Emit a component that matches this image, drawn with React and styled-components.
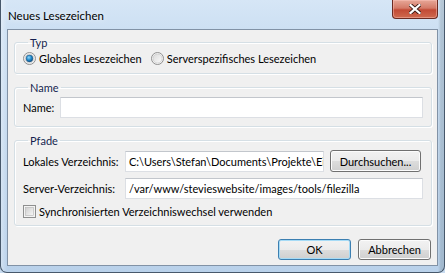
import React, { useState } from 'react';
import styled, { createGlobalStyle } from 'styled-components';

const GlobalStyle = createGlobalStyle`
  html, body {
    margin: 0;
    padding: 0;
    width: 445px;
    height: 273px;
    overflow: hidden;
    background: #c8dbef;
  }
  * { box-sizing: border-box; }
`;

const Frame = styled.div`
  width: 445px;
  height: 273px;
  display: flex;
  flex-direction: column;
  padding: 0 6px 6px 6px;
  border: 1px solid #47586b;
  border-top: none;
  border-radius: 0 0 7px 7px;
  background:
    linear-gradient(90deg, rgba(255,255,255,0.35) 0, rgba(255,255,255,0) 6px, rgba(255,255,255,0) 437px, rgba(90,110,120,0.25) 440px),
    linear-gradient(180deg, #d6e6f6 0, #cde0f3 28px, #b9d1ea 100%);
  font-family: Lato, "Open Sans", sans-serif;
  font-size: 11px;
  color: #000;
  white-space: nowrap;
`;

const TitleBar = styled.div`
  height: 29px;
  display: flex;
  justify-content: space-between;
  align-items: flex-start;
`;

const Title = styled.div`
  margin: 8px 0 0 1px;
  line-height: 16px;
  font-size: 11.5px;
  color: #000;
  text-shadow: 0 0 6px rgba(255, 255, 255, 0.9);
`;

const CloseButton = styled.div`
  width: 46px;
  height: 19px;
  display: flex;
  align-items: center;
  justify-content: center;
  border: 1px solid #6b2b22;
  border-top: none;
  border-radius: 0 0 4px 4px;
  background: linear-gradient(180deg, #e7a898 0, #d47a68 45%, #c24a35 55%, #cf6a4f 100%);
  box-shadow: inset 0 0 0 1px rgba(255, 200, 190, 0.45);
`;

const Client = styled.div`
  flex: 1;
  display: flex;
  flex-direction: column;
  border: 1px solid #8192a6;
  background: #f0f0f0;
  padding: 5px 5px 5px 6px;
`;

const Group = styled.fieldset`
  margin: ${({ $first }) => ($first ? '0' : '6px')} 0 0 0;
  padding: 0 8px ${({ $bottom }) => $bottom}px 8px;
  border: 1px solid #d5dfe5;
  border-radius: 3px;
  box-shadow: inset 1px 1px 0 #fff, 1px 1px 0 #fff;
  min-width: 0;
`;

const Legend = styled.legend`
  margin-left: 5px;
  padding: 0 2px;
  line-height: 15px;
  color: #151f4f;
`;

const RadioRow = styled.div`
  height: 16px;
  display: flex;
  align-items: center;
`;

const RadioOption = styled.label`
  display: flex;
  align-items: center;
  gap: 3px;
  margin-right: ${({ $gap }) => $gap || 0}px;
`;

const FieldRow = styled.div`
  display: flex;
  align-items: center;
  margin-top: ${({ $top }) => $top || 0}px;
`;

const Label = styled.div`
  width: ${({ $w }) => $w}px;
  flex: none;
`;

const TextBox = styled.div`
  height: 21px;
  width: ${({ $w }) => ($w ? `${$w}px` : 'auto')};
  flex: ${({ $w }) => ($w ? 'none' : '1')};
  min-width: 0;
  padding: 0 2px 0 3px;
  display: flex;
  align-items: center;
  overflow: hidden;
  background: #fff;
  border: 1px solid #dcdfe4;
  border-top-color: #c2c6cc;
`;

const Button = styled.div`
  width: ${({ $w }) => $w}px;
  height: ${({ $h }) => $h || 21}px;
  flex: none;
  display: flex;
  align-items: center;
  justify-content: center;
  border: 1px solid ${({ $default }) => ($default ? '#3c7fb1' : '#707070')};
  border-radius: 3px;
  background: linear-gradient(180deg, #f2f2f2 0, #ebebeb 50%, #dddddd 50%, #cfcfcf 100%);
  box-shadow: inset 0 0 0 1px ${({ $default }) => ($default ? '#a6dbf6' : '#fcfcfc')};
  margin-left: ${({ $ml }) => $ml || 0}px;
`;

const CheckRow = styled.label`
  display: flex;
  align-items: center;
  gap: 3px;
  height: 16px;
  margin-top: 4px;
`;

const Footer = styled.div`
  margin-top: auto;
  display: flex;
  justify-content: flex-end;
  padding-right: 1px;
`;

const CloseX = () => (
  <svg width="12" height="10" viewBox="0 0 12 10">
    <path d="M1.5 1 L10.5 9 M10.5 1 L1.5 9" stroke="#3a1a14" strokeWidth="4" strokeLinecap="square" />
    <path d="M1.5 1 L10.5 9 M10.5 1 L1.5 9" stroke="#fff" strokeWidth="2.2" strokeLinecap="square" />
  </svg>
);

const Radio = ({ checked }) => (
  <svg width="13" height="13" viewBox="0 0 13 13">
    <defs>
      <linearGradient id="rbg" x1="0" y1="0" x2="1" y2="1">
        <stop offset="0" stopColor="#d9d9d9" />
        <stop offset="1" stopColor="#fbfbfb" />
      </linearGradient>
      <radialGradient id="rdot" cx="0.4" cy="0.35" r="0.7">
        <stop offset="0" stopColor="#8fd6fb" />
        <stop offset="0.55" stopColor="#1d86c8" />
        <stop offset="1" stopColor="#0c4a7e" />
      </radialGradient>
    </defs>
    <circle cx="6.5" cy="6.5" r="6" fill="#f4f4f4" stroke="#8f8f8f" />
    <circle cx="6.5" cy="6.5" r="4.5" fill="url(#rbg)" stroke="#c5c5c5" strokeWidth="0.6" />
    {checked && <circle cx="6.5" cy="6.5" r="3.4" fill="url(#rdot)" stroke="#1b4f7a" strokeWidth="0.5" />}
  </svg>
);

const Checkbox = () => (
  <svg width="13" height="13" viewBox="0 0 13 13">
    <defs>
      <linearGradient id="cbg" x1="0" y1="0" x2="1" y2="1">
        <stop offset="0" stopColor="#cfcfcf" />
        <stop offset="1" stopColor="#f7f7f7" />
      </linearGradient>
    </defs>
    <rect x="0.5" y="0.5" width="12" height="12" fill="#f4f4f4" stroke="#8e8f8f" />
    <rect x="2.5" y="2.5" width="8" height="8" fill="url(#cbg)" stroke="#b5b5b5" strokeWidth="0.6" />
  </svg>
);

const App = () => {
  const [global] = useState(true);

  return (
    <>
      <GlobalStyle />
      <Frame>
        <TitleBar>
          <Title>Neues Lesezeichen</Title>
          <CloseButton>
            <CloseX />
          </CloseButton>
        </TitleBar>
        <Client>
          <Group $first $bottom={7}>
            <Legend>Typ</Legend>
            <RadioRow>
              <RadioOption $gap={9}>
                <Radio checked={global} />
                Globales Lesezeichen
              </RadioOption>
              <RadioOption>
                <Radio checked={!global} />
                Serverspezifisches Lesezeichen
              </RadioOption>
            </RadioRow>
          </Group>

          <Group $bottom={8}>
            <Legend>Name</Legend>
            <FieldRow $top={2}>
              <Label $w={37}>Name:</Label>
              <TextBox />
            </FieldRow>
          </Group>

          <Group $bottom={6}>
            <Legend>Pfade</Legend>
            <FieldRow $top={2}>
              <Label $w={102}>Lokales Verzeichnis:</Label>
              <TextBox $w={199}>C:\Users\Stefan\Documents\Projekte\Ei</TextBox>
              <Button $w={91} $h={22} $ml={6}>Durchsuchen...</Button>
            </FieldRow>
            <FieldRow $top={6}>
              <Label $w={102}>Server-Verzeichnis:</Label>
              <TextBox>/var/www/stevieswebsite/images/tools/filezilla</TextBox>
            </FieldRow>
            <CheckRow>
              <Checkbox />
              Synchronisierten Verzeichniswechsel verwenden
            </CheckRow>
          </Group>

          <Footer>
            <Button $w={73} $default>OK</Button>
            <Button $w={73} $ml={7}>Abbrechen</Button>
          </Footer>
        </Client>
      </Frame>
    </>
  );
};

export default App;
